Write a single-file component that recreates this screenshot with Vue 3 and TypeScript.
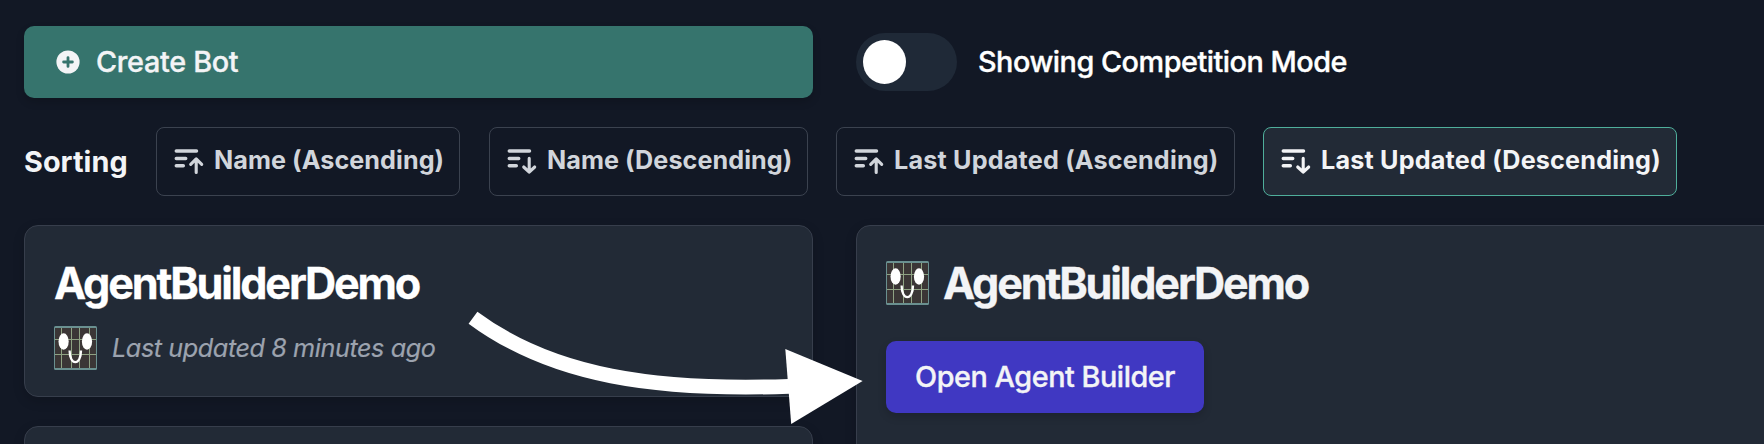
<script setup lang="ts">
import { defineComponent, h, ref } from 'vue'

interface SortOption {
  key: string
  label: string
  dir: 'asc' | 'desc'
}

const sortOptions: SortOption[] = [
  { key: 'name-asc', label: 'Name (Ascending)', dir: 'asc' },
  { key: 'name-desc', label: 'Name (Descending)', dir: 'desc' },
  { key: 'updated-asc', label: 'Last Updated (Ascending)', dir: 'asc' },
  { key: 'updated-desc', label: 'Last Updated (Descending)', dir: 'desc' },
]
const activeSort = ref<string>('updated-desc')
const practiceMode = ref<boolean>(false)

const BotAvatar = defineComponent({
  setup: () => () =>
    h('svg', { width: 43, height: 44, viewBox: '0 0 43 44' }, [
      h('rect', { width: 43, height: 44, rx: 1.5, fill: '#6a9090' }),
      h('rect', { x: 1, y: 2, width: 41, height: 40, fill: '#3b3636' }),
      h('path', { d: 'M7.5 2v40M17.5 2v40M25.5 2v40M35.5 2v40M1 13.5h41M1 28.5h41', stroke: '#8fa283', 'stroke-width': 1 }),
      h('ellipse', { cx: 9.6, cy: 15.5, rx: 5.1, ry: 8.3, fill: '#fff' }),
      h('ellipse', { cx: 33, cy: 15.5, rx: 5.1, ry: 8.3, fill: '#fff' }),
      h('path', { d: 'M15.6 24.5C15.6 40 27 40 27 24.5', stroke: '#fff', 'stroke-width': 2.3, fill: 'none' }),
    ]),
})
</script>

<template>
  <main class="page">
    <div class="top">
      <button class="create">
        <svg width="24" height="24" viewBox="0 0 24 24">
          <circle cx="12" cy="12" r="11.6" fill="#f3f4f6" />
          <path d="M12 7.6v8.8M7.6 12h8.8" stroke="#36746d" stroke-width="2.8" stroke-linecap="round" />
        </svg>
        <span class="create-text">Create Bot</span>
      </button>
      <label class="mode">
        <span class="track" :class="{ on: practiceMode }" @click="practiceMode = !practiceMode"><span class="knob" /></span>
        <span class="mode-text">Showing Competition Mode</span>
      </label>
    </div>

    <div class="sorting">
      <h3 class="sort-title">Sorting</h3>
      <button
        v-for="o in sortOptions"
        :key="o.key"
        class="sort"
        :class="[o.key, { active: activeSort === o.key }]"
        @click="activeSort = o.key"
      >
        <svg width="30" height="28" viewBox="0 0 30 28" fill="none" stroke="currentColor" stroke-width="3.5" stroke-linecap="round" stroke-linejoin="round">
          <path d="M2.3 4h20.2M2.3 11.4h9.4M2.3 18.7h7" />
          <path v-if="o.dir === 'asc'" stroke-width="3.1" d="M22.2 25.5V12M16.7 17.4l5.5-5.5 5.5 5.5" />
          <path v-else stroke-width="3.1" d="M22.2 11.4V25M16.7 20l5.5 5.2 5.5-5.2" />
        </svg>
        <span class="sort-text">{{ o.label }}</span>
      </button>
    </div>

    <div class="columns">
      <div class="list">
        <article class="card bot">
          <h2 class="name">AgentBuilderDemo</h2>
          <div class="meta">
            <BotAvatar />
            <em class="updated">Last updated 8 minutes ago</em>
          </div>
        </article>
        <article class="card bot" />
      </div>
      <section class="card detail">
        <header class="detail-head">
          <BotAvatar />
          <h2 class="name">AgentBuilderDemo</h2>
        </header>
        <button class="open"><span class="open-text">Open Agent Builder</span></button>
      </section>
    </div>

    <svg class="arrow" width="396" height="116" viewBox="468 310 396 116">
      <path d="M473 317.7C553 377 657 391 789 386.3" fill="none" stroke="#fff" stroke-width="14.8" />
      <path d="M785.3 349L862.6 381L791.2 424Z" fill="#fff" />
    </svg>
  </main>
</template>

<style>
html,
body {
  background: #121825;
  overflow: hidden;
}
</style>

<style scoped>
* {
  box-sizing: border-box;
}
.page {
  position: relative;
  width: 1764px;
  height: 444px;
  overflow: hidden;
  padding: 26px 0 0 24px;
  background: #121825;
  color: #f3f4f6;
  font-family: Inter, 'Liberation Sans', sans-serif;
  font-size: 28.8px;
}
button {
  font: inherit;
  color: inherit;
  border: 0;
  white-space: nowrap;
  display: flex;
  align-items: center;
}
h2,
h3 {
  margin: 0;
}
svg {
  flex: none;
  display: block;
}
.top {
  display: flex;
  gap: 43px;
  height: 72px;
}
.create {
  width: 789px;
  height: 72px;
  padding: 0 0 0 31.5px;
  gap: 16.5px;
  border-radius: 10px;
  background: #36746d;
  font-weight: 500;
  letter-spacing: -0.32px;
  box-shadow: 0 4px 8px rgba(0, 0, 0, 0.16);
}
.create-text,
.mode-text,
.open-text {
  padding-bottom: 2px;
  -webkit-text-stroke: 0.35px currentColor;
}
.mode {
  display: flex;
  align-items: center;
  gap: 21px;
  font-weight: 500;
  letter-spacing: -0.48px;
  color: #fff;
  white-space: nowrap;
}
.track {
  width: 101px;
  height: 58px;
  padding: 7px;
  border-radius: 29px;
  background: #1f2937;
  display: flex;
}
.track.on {
  justify-content: flex-end;
}
.knob {
  width: 43px;
  height: 44px;
  border-radius: 50%;
  background: #fff;
}
.sorting {
  display: flex;
  align-items: center;
  height: 69px;
  margin-top: 29px;
}
.sort-title {
  width: 132px;
  flex: none;
  font-size: 28.8px;
  font-weight: 700;
  letter-spacing: 0.05px;
}
.sort {
  flex: none;
  height: 69px;
  margin-right: 28px;
  padding: 0 0 2px 17px;
  gap: 10px;
  border: 1px solid #3b424f;
  border-radius: 8px;
  background: transparent;
  color: #d1d5db;
  font-size: 25.2px;
  font-weight: 700;
  letter-spacing: 0.06px;
}
.sort-text {
  padding-bottom: 2px;
}
.name-asc {
  width: 304px;
  margin-right: 29px;
}
.name-desc {
  width: 319px;
}
.updated-asc {
  width: 399px;
  letter-spacing: 0.18px;
}
.updated-desc {
  width: 414px;
  letter-spacing: 0.18px;
}
.sort.active {
  border-color: #4fae9b;
  background: #222a36;
  color: #f3f4f6;
}
.columns {
  display: flex;
  gap: 43px;
  margin-top: 29px;
}
.list {
  flex: none;
  width: 789px;
  display: flex;
  flex-direction: column;
  gap: 29px;
}
.card {
  border: 1px solid #373e4c;
  border-radius: 14px;
  background: #222a36;
  box-shadow: 0 4px 12px rgba(0, 0, 0, 0.16);
}
.bot {
  height: 172px;
  padding: 28px 29px;
}
.name {
  font-size: 43.2px;
  line-height: 58px;
  font-weight: 700;
  letter-spacing: -2.18px;
  color: #fff;
  -webkit-text-stroke: 0.3px currentColor;
}
.meta {
  display: flex;
  align-items: center;
  gap: 15px;
  margin-top: 14px;
}
.updated {
  font-size: 25.2px;
  letter-spacing: -0.41px;
  color: #9ca3af;
  -webkit-text-stroke: 0.2px currentColor;
}
.detail {
  flex: none;
  width: 940px;
  height: 300px;
  padding: 28px 29px;
}
.detail-head {
  display: flex;
  align-items: center;
  gap: 14px;
}
.detail-head .name {
  color: #f3f4f6;
}
.open {
  width: 318px;
  height: 72px;
  margin-top: 29px;
  justify-content: center;
  padding: 0;
  border-radius: 10px;
  background: #4038c2;
  font-weight: 500;
  letter-spacing: -0.46px;
  box-shadow: 0 4px 8px rgba(0, 0, 0, 0.16);
}
.arrow {
  position: absolute;
  left: 468px;
  top: 310px;
}
</style>
